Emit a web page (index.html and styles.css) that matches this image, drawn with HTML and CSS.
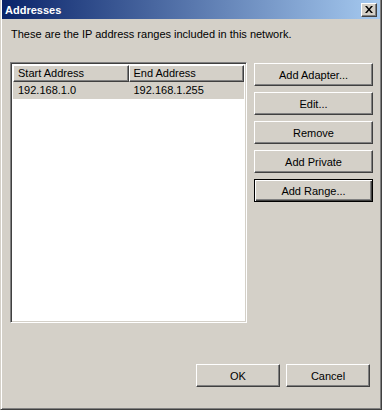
FILE: index.html
```html
<!DOCTYPE html>
<html lang="en">
<head>
    <meta charset="UTF-8">
    <title>Addresses</title>
    <link rel="stylesheet" href="styles.css">
</head>
<body>

    <div class="window">
        <!-- Title bar -->
        <div class="titlebar">
            <span class="title">Addresses</span>
            <button class="close-btn" type="button" aria-label="Close">
                <svg width="8" height="7" viewBox="0 0 8 7">
                    <path d="M0 0h2l2 2.5L6 0h2L5 3.5 8 7H6L4 4.5 2 7H0l3-3.5z" fill="#000"/>
                </svg>
            </button>
        </div>

        <div class="content">
            <p class="intro">These are the IP address ranges included in this network.</p>

            <div class="main">
                <!-- Address list -->
                <div class="listview">
                    <div class="list-header">
                        <div class="col-head">Start Address</div>
                        <div class="col-head">End Address</div>
                    </div>
                    <div class="list-row selected">
                        <span class="cell">192.168.1.0</span>
                        <span class="cell">192.168.1.255</span>
                    </div>
                </div>

                <!-- Side buttons -->
                <div class="side-buttons">
                    <button class="btn" type="button">Add Adapter...</button>
                    <button class="btn" type="button">Edit...</button>
                    <button class="btn" type="button">Remove</button>
                    <button class="btn" type="button">Add Private</button>
                    <button class="btn default" type="button">Add Range...</button>
                </div>
            </div>

            <div class="footer">
                <button class="btn footer-btn" type="button">OK</button>
                <button class="btn footer-btn" type="button">Cancel</button>
            </div>
        </div>
    </div>

</body>
</html>
```

FILE: styles.css
```css
/* Basic reset */
* {
    margin: 0;
    padding: 0;
    box-sizing: border-box;
}

body {
    font-family: "Liberation Sans", Arial, sans-serif;
    font-size: 11px;
    color: #000;
    background-color: #d4d0c8;
}

/* Window frame */
.window {
    width: 382px;
    height: 410px;
    display: flex;
    flex-direction: column;
    background-color: #d4d0c8;
    border-left: 1px solid #d4d0c8;
    border-right: 1px solid #404040;
    border-bottom: 1px solid #404040;
    box-shadow: inset 1px 0 #fff, inset -1px -1px #808080;
    padding: 0 1px 2px 1px;
}

.titlebar {
    height: 19px;
    display: flex;
    align-items: center;
    justify-content: space-between;
    padding: 0 3px 0 3px;
    background: linear-gradient(to right, #0a246a, #a6caf0);
}

.title {
    color: #fff;
    font-weight: bold;
    font-size: 11px;
}

.close-btn {
    width: 16px;
    height: 14px;
    display: flex;
    align-items: center;
    justify-content: center;
    background-color: #d4d0c8;
    border: 1px solid;
    border-color: #fff #404040 #404040 #fff;
    box-shadow: inset -1px -1px #808080;
}

/* Content */
.content {
    flex: 1;
    display: flex;
    flex-direction: column;
    padding: 9px 9px 0 8px;
}

.intro {
    line-height: 13px;
    margin-bottom: 21px;
    padding-left: 1px;
}

.main {
    display: flex;
    gap: 7px;
}

/* Sunken list view */
.listview {
    width: 237px;
    height: 261px;
    background-color: #fff;
    border: 1px solid;
    border-color: #808080 #fff #fff #808080;
    box-shadow: inset 1px 1px #404040, inset -1px -1px #d4d0c8;
    padding: 2px;
}

.list-header {
    display: flex;
}

.col-head {
    width: 116px;
    height: 17px;
    line-height: 15px;
    padding-left: 4px;
    background-color: #d4d0c8;
    border: 1px solid;
    border-color: #fff #404040 #404040 #fff;
    box-shadow: inset -1px -1px #808080;
}

.list-row {
    display: flex;
    height: 17px;
    line-height: 16px;
}

.list-row.selected {
    background-color: #d4d0c8;
}

.cell {
    width: 116px;
    padding-left: 5px;
}

/* Buttons */
.side-buttons {
    display: flex;
    flex-direction: column;
    gap: 6px;
    padding-top: 1px;
}

.btn {
    width: 119px;
    height: 23px;
    font-family: "Liberation Sans", Arial, sans-serif;
    font-size: 11px;
    color: #000;
    background-color: #d4d0c8;
    border: 1px solid;
    border-color: #fff #404040 #404040 #fff;
    box-shadow: inset -1px -1px #808080;
}

.btn.default {
    border-color: #000;
    box-shadow: inset 1px 1px #fff, inset -1px -1px #404040, inset -2px -2px #808080;
}

.footer {
    margin-top: auto;
    margin-bottom: 20px;
    display: flex;
    justify-content: flex-end;
    gap: 6px;
    padding-right: 1px;
}

.footer-btn {
    width: 84px;
}
```
